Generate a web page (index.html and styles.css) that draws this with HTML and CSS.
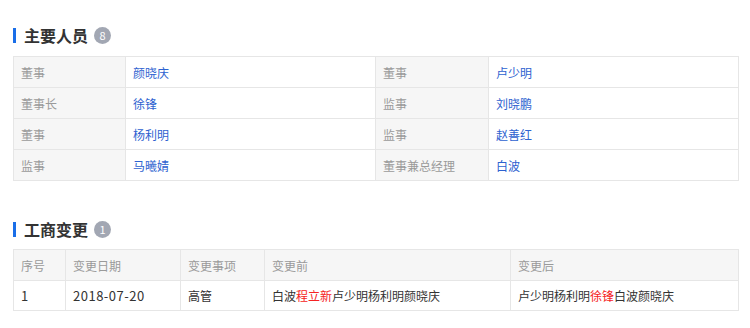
FILE: index.html
```html
<!DOCTYPE html>
<html lang="zh-CN">
<head>
<meta charset="utf-8">
<title>主要人员</title>
<link rel="stylesheet" href="styles.css">
</head>
<body>
<div class="page">
  <section class="section first">
    <h2 class="title"><span class="bar"></span>主要人员<span class="badge">8</span></h2>
    <table class="grid people">
      <colgroup>
        <col class="c-l"><col class="c-v"><col class="c-l2"><col class="c-v">
      </colgroup>
      <tr><td class="lbl">董事</td><td class="val">颜晓庆</td><td class="lbl">董事</td><td class="val">卢少明</td></tr>
      <tr><td class="lbl">董事长</td><td class="val">徐锋</td><td class="lbl">监事</td><td class="val">刘晓鹏</td></tr>
      <tr><td class="lbl">董事</td><td class="val">杨利明</td><td class="lbl">监事</td><td class="val">赵善红</td></tr>
      <tr><td class="lbl">监事</td><td class="val">马曦婧</td><td class="lbl">董事兼总经理</td><td class="val">白波</td></tr>
    </table>
  </section>
  <section class="section second">
    <h2 class="title"><span class="bar"></span>工商变更<span class="badge">1</span></h2>
    <table class="grid changes">
      <colgroup>
        <col class="k1"><col class="k2"><col class="k3"><col class="k4"><col class="k5">
      </colgroup>
      <tr class="head"><td>序号</td><td>变更日期</td><td>变更事项</td><td>变更前</td><td>变更后</td></tr>
      <tr class="row"><td class="num">1</td><td class="num">2018-07-20</td><td>高管</td><td>白波<em>程立新</em>卢少明杨利明颜晓庆</td><td>卢少明杨利明<em>徐锋</em>白波颜晓庆</td></tr>
    </table>
  </section>
</div>
</body>
</html>
```
FILE: styles.css
```css
html, body {
  margin: 0;
  padding: 0;
  background: #ffffff;
}
body {
  font-family: "Noto Sans CJK SC", "Noto Sans", sans-serif;
  color: #333333;
}
.page {
  padding: 24px 0 0 13px;
  width: 725px;
}
.section.second {
  margin-top: 37px;
}
.title {
  display: flex;
  align-items: center;
  margin: 0 0 10px 0;
  height: 22px;
  font-size: 16px;
  font-weight: bold;
  color: #333333;
  letter-spacing: 0;
}
.section.second .title {
  margin-bottom: 9px;
}
.bar {
  display: inline-block;
  width: 3px;
  height: 15px;
  background: #1a6ee8;
  margin-right: 8px;
}
.badge {
  display: inline-flex;
  align-items: center;
  justify-content: center;
  width: 17px;
  height: 17px;
  border-radius: 50%;
  background: #a2a7b3;
  color: #ffffff;
  font-size: 11px;
  font-weight: normal;
  margin-left: 6px;
  line-height: 1;
}
.grid {
  width: 725px;
  border-collapse: collapse;
  table-layout: fixed;
  font-size: 12px;
}
.grid td {
  border: 1px solid #e6e6e6;
  height: 31px;
  padding: 0 7px;
  box-sizing: border-box;
  vertical-align: middle;
  white-space: nowrap;
}
.c-l { width: 112px; }
.c-l2 { width: 113px; }
.c-v { width: 250px; }
.lbl {
  background: #f6f6f6;
  color: #9a9a9a;
}
.val {
  color: #2d62d0;
}
.k1 { width: 52px; }
.k2 { width: 115px; }
.k3 { width: 84px; }
.k4 { width: 246px; }
.k5 { width: 228px; }
.changes .head td {
  background: #f6f6f6;
  color: #9a9a9a;
  height: 31px;
}
.changes .row td {
  color: #333333;
  height: 30px;
}
.changes .row td.num {
  font-size: 13px;
  letter-spacing: 0.5px;
}
.changes em {
  font-style: normal;
  color: #f52323;
}
```
